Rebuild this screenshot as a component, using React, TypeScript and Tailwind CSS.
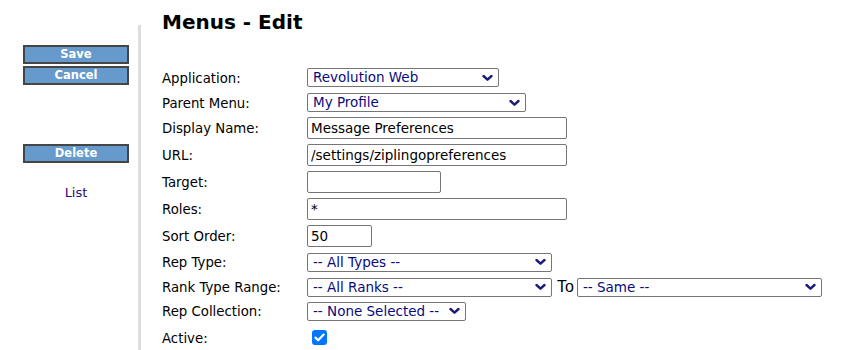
import React from "react";

const font = { fontFamily: '"DejaVu Sans", Verdana, sans-serif' };

function Chevron() {
  return (
    <svg
      className="pointer-events-none absolute right-[6px] top-1/2 -translate-y-1/2"
      width="11"
      height="7"
      viewBox="0 0 11 7"
    >
      <path d="M1.5 1.5 L5.5 5.2 L9.5 1.5" fill="none" stroke="#1a1a7e" strokeWidth="2.4" strokeLinecap="round" strokeLinejoin="round" />
    </svg>
  );
}

function Select({ value, w }: { value: string; w: string }) {
  return (
    <div className={`relative h-[19px] ${w}`}>
      <select
        defaultValue={value}
        className="block h-[19px] w-full appearance-none rounded-[2px] border border-[#767676] bg-white py-0 pl-[5px] pr-6 text-[13.5px] leading-[17px] text-[#0a0a80] outline-none"
        style={font}
      >
        <option>{value}</option>
      </select>
      <Chevron />
    </div>
  );
}

function TextInput({ value, w }: { value: string; w: string }) {
  return (
    <input
      type="text"
      defaultValue={value}
      className={`block h-[22px] ${w} rounded-[2px] border border-[#767676] bg-white px-[3px] text-[13.5px] text-black outline-none`}
      style={font}
    />
  );
}

function Row({ label, h, children }: { label: string; h: string; children: React.ReactNode }) {
  return (
    <div className={`flex ${h} items-center`}>
      <div className="w-[145px] shrink-0 pt-[2px] text-[13.3px] text-black">{label}</div>
      <div className="flex items-center">{children}</div>
    </div>
  );
}

function Btn({ label }: { label: string }) {
  return (
    <div className="flex h-[19px] w-[106px] items-center justify-center border-2 border-[#454545] bg-[#6699cc] text-[11.5px] font-bold leading-none text-white">
      {label}
    </div>
  );
}

export default function App() {
  return (
    <div className="flex h-[350px] w-[848px] overflow-hidden bg-white" style={font}>
      <div className="mt-[25px] w-[141px] shrink-0 border-r-[3px] border-[#dddddd] pt-[20px]">
        <div className="ml-[23px] flex w-[106px] flex-col gap-[2px]">
          <Btn label="Save" />
          <Btn label="Cancel" />
        </div>
        <div className="ml-[23px] mt-[59px] w-[106px]">
          <Btn label="Delete" />
        </div>
        <div className="ml-[23px] mt-[20px] w-[106px] text-center text-[13px] text-[#2b0a78]">List</div>
      </div>
      <div className="pl-[21px]">
        <h1 className="pt-[10px] text-[20px] font-bold leading-[24px] text-black">Menus - Edit</h1>
        <div className="mt-[31px] flex flex-col">
          <Row label="Application:" h="h-[25px]">
            <Select value="Revolution Web" w="w-[192px]" />
          </Row>
          <Row label="Parent Menu:" h="h-[25px]">
            <Select value="My Profile" w="w-[219px]" />
          </Row>
          <Row label="Display Name:" h="h-[26px]">
            <TextInput value="Message Preferences" w="w-[260px]" />
          </Row>
          <Row label="URL:" h="h-[27px]">
            <TextInput value="/settings/ziplingopreferences" w="w-[260px]" />
          </Row>
          <Row label="Target:" h="h-[27px]">
            <TextInput value="" w="w-[134px]" />
          </Row>
          <Row label="Roles:" h="h-[27px]">
            <TextInput value="*" w="w-[260px]" />
          </Row>
          <Row label="Sort Order:" h="h-[27px]">
            <TextInput value="50" w="w-[65px]" />
          </Row>
          <Row label="Rep Type:" h="h-[26px]">
            <Select value="-- All Types --" w="w-[245px]" />
          </Row>
          <Row label="Rank Type Range:" h="h-[24px]">
            <Select value="-- All Ranks --" w="w-[245px]" />
            <span
              className="ml-[5px] mr-[3px] text-[16px] leading-none text-black"
              style={{ fontFamily: '"Liberation Sans", Arial, sans-serif' }}
            >
              To
            </span>
            <Select value="-- Same --" w="w-[245px]" />
          </Row>
          <Row label="Rep Collection:" h="h-[24px]">
            <Select value="-- None Selected --" w="w-[159px]" />
          </Row>
          <Row label="Active:" h="h-[29px]">
            <span className="ml-[5px] flex h-[15px] w-[15px] items-center justify-center rounded-[3px] bg-[#0075ff]">
              <svg width="11" height="9" viewBox="0 0 11 9">
                <path d="M1.5 4.6 L4.2 7.2 L9.6 1.6" fill="none" stroke="white" strokeWidth="2.2" strokeLinecap="round" strokeLinejoin="round" />
              </svg>
            </span>
          </Row>
        </div>
      </div>
    </div>
  );
}
